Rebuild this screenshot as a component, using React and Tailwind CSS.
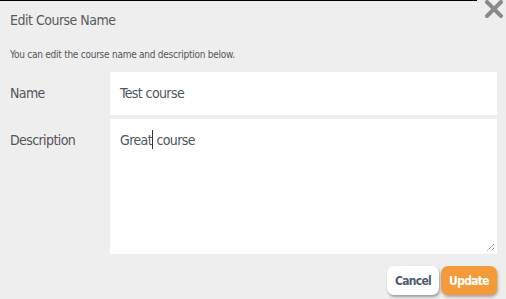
import React from "react";

const font = { fontFamily: '"DejaVu Sans Condensed", "Liberation Sans", sans-serif' };

const App = () => {
  return (
    <div
      className="relative w-[506px] h-[299px] bg-[#eeeeee] text-[#555555] overflow-hidden"
      style={font}
    >
      {/* top edge line */}
      <div className="h-px w-[477px] bg-black"></div>

      {/* close icon */}
      <button className="absolute top-0 right-[2px] w-[20px] h-[19px]">
        <svg viewBox="0 0 20 19" className="w-[20px] h-[19px]">
          <path d="M3 2 L17 16 M17 2 L3 16" stroke="#8a8a8a" strokeWidth="4" strokeLinecap="round" />
        </svg>
      </button>

      <div className="pl-[10px] pr-[9px]">
        <h1 className="text-[14px] leading-[20px] pt-[9px] tracking-[-0.5px] text-[#5a5a5a]">Edit Course Name</h1>
        <p className="text-[10px] leading-[14px] mt-[18px] tracking-[-0.25px]">You can edit the course name and description below.</p>

        <div className="mt-[10px] flex items-center">
          <label className="w-[100px] text-[14px] tracking-[-0.6px]">Name</label>
          <div className="flex-1 h-[43px] bg-white flex items-center pl-[10px] text-[14px] tracking-[-0.6px] text-[#4f5560]">
            Test course
          </div>
        </div>

        <div className="mt-[4px] flex items-start">
          <label className="w-[100px] text-[14px] tracking-[-0.6px] pt-[11px]">Description</label>
          <div className="relative flex-1 h-[135px] bg-white pl-[10px] pt-[11px] text-[14px] tracking-[-0.6px] text-[#4f5560]">
            <span>Great</span>
            <span className="inline-block align-[-4px] w-px h-[19px] bg-[#333333]"></span>
            <span> course</span>
            <svg viewBox="0 0 9 9" className="absolute right-[2px] bottom-[2px] w-[9px] h-[9px]">
              <path d="M8 1 L1 8 M8 5 L5 8" stroke="#555" strokeWidth="1" strokeDasharray="1 1" />
            </svg>
          </div>
        </div>

        <div className="mt-[12px] flex justify-end gap-[2px]">
          <button className="w-[52px] h-[29px] rounded-[7px] bg-white text-[12px] tracking-[-0.7px] font-bold text-[#505a6e] shadow-[1px_2px_3px_rgba(0,0,0,0.35)]">
            Cancel
          </button>
          <button className="w-[56px] h-[29px] rounded-[7px] bg-[#f39a3a] text-[12px] tracking-[-0.7px] font-bold text-white shadow-[1px_2px_3px_rgba(0,0,0,0.3)]">
            Update
          </button>
        </div>
      </div>
    </div>
  );
};

export default App;
